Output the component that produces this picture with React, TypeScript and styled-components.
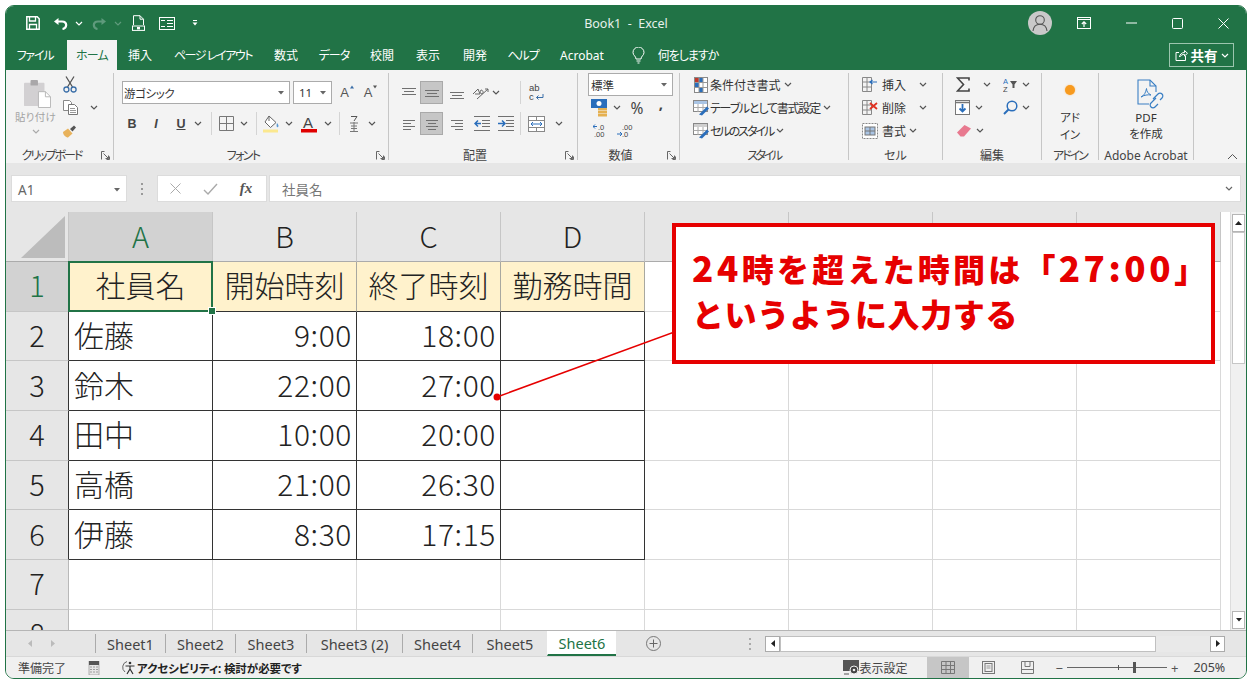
import React from "react"
import styled, { createGlobalStyle } from "styled-components"

const UI = `"Noto Sans", "Noto Sans CJK JP", sans-serif`
const CJK = `"Noto Sans CJK JP", "Noto Sans", sans-serif`
const GREEN = "#217346"

const Global = createGlobalStyle`
  html, body { margin: 0; padding: 0; background: #fff; }
  * { box-sizing: border-box; }
`

const Page = styled.div`
  width: 1252px;
  height: 685px;
  padding: 5px 5px 6px 5px;
  overflow: hidden;
  background: #fff;
  font-family: ${UI};
  font-feature-settings: "palt";
`

const Win = styled.div`
  width: 1242px;
  height: 674px;
  border: 1px solid ${GREEN};
  border-radius: 9px;
  overflow: hidden;
  display: flex;
  flex-direction: column;
  background: #f3f3f3;
`

const Ico = styled.svg`
  display: block;
  flex: none;
  fill: none;
`

/* title bar */
const TitleBar = styled.div`
  height: 34px;
  flex: none;
  background: ${GREEN};
  display: grid;
  grid-template-columns: 1fr auto 1fr;
  align-items: center;
  color: #fff;
`

const Qat = styled.div`
  display: flex;
  align-items: center;
  padding-left: 16px;
`

const WinButtons = styled.div`
  display: flex;
  align-items: center;
  justify-content: flex-end;
`

const AppTitle = styled.div`
  font-size: 12.5px;
  color: #e8f1ec;
  white-space: pre;
`

const Avatar = styled.div`
  width: 24px;
  height: 24px;
  border-radius: 50%;
  background: #c9c9c9;
  display: flex;
  align-items: center;
  justify-content: center;
  margin-right: 8px;
`

const Slot = styled.div<{ $w: number; $h?: number; $on?: boolean }>`
  width: ${(p) => p.$w}px;
  height: ${(p) => p.$h ?? 23}px;
  flex: none;
  display: flex;
  align-items: center;
  justify-content: center;
  ${(p) => (p.$on ? "background: #c6c6c6; border: 1px solid #a9a9a9;" : "")}
`

/* tab strip */
const TabStrip = styled.div`
  height: 30px;
  flex: none;
  background: ${GREEN};
  display: flex;
  align-items: stretch;
  padding-right: 12px;
`

const Tab = styled.div<{ $w: number; $active?: boolean; $track?: number }>`
  width: ${(p) => p.$w}px;
  flex: none;
  display: flex;
  align-items: center;
  justify-content: center;
  font-size: 12px;
  white-space: pre;
  letter-spacing: ${(p) => p.$track ?? 0}px;
  color: ${(p) => (p.$active ? GREEN : "#fff")};
  background: ${(p) => (p.$active ? "#f3f3f3" : "transparent")};
  margin-left: ${(p) => (p.$active ? "3px" : "0")};
`

const ShareButton = styled.div`
  margin: 3px 0 3px auto;
  width: 65px;
  border: 1px solid #9cc5ae;
  display: flex;
  align-items: center;
  justify-content: center;
  gap: 3px;
  color: #fff;
  font-size: 13.5px;
  font-weight: 700;
`

/* ribbon */
const Ribbon = styled.div`
  height: 93px;
  flex: none;
  background: #f3f3f3;
  padding: 3px 0 3px 0;
  display: flex;
`

const Group = styled.div<{ $w: number }>`
  width: ${(p) => p.$w}px;
  flex: none;
  display: flex;
  flex-direction: column;
  border-right: 1px solid #c6c6c6;
`

const GroupBody = styled.div<{ $pl?: number; $pt?: number; $gap?: number }>`
  flex: 1;
  min-height: 0;
  padding-left: ${(p) => p.$pl ?? 0}px;
  padding-top: ${(p) => p.$pt ?? 0}px;
  display: flex;
  flex-direction: column;
  gap: ${(p) => p.$gap ?? 0}px;
`

const GroupLabel = styled.div<{ $launcher?: boolean }>`
  height: 15px;
  flex: none;
  margin-bottom: -3px;
  display: grid;
  grid-template-columns: ${(p) => (p.$launcher ? "1fr 16px" : "1fr")};
  align-items: center;
  font-size: 12px;
  line-height: 15px;
  color: #444;
  text-align: center;
  white-space: nowrap;

  & > svg {
    justify-self: end;
    margin-right: 3px;
  }
`

const ToolRow = styled.div`
  display: flex;
  align-items: center;
  height: 23px;
  flex: none;
  font-size: 12px;
  color: #333;
  white-space: nowrap;
`

const RowText = styled.span<{ $track?: number }>`
  letter-spacing: ${(p) => p.$track ?? 0}px;
`

const Split = styled.div`
  display: flex;
  height: 100%;
`

const Column = styled.div<{ $w: number; $start?: boolean }>`
  width: ${(p) => p.$w}px;
  flex: none;
  display: flex;
  flex-direction: column;
  align-items: ${(p) => (p.$start ? "flex-start" : "center")};
`

const PasteIconBox = styled.div`
  height: 37px;
  padding: 6px 0 0 3px;
`

const PasteLabel = styled.div`
  font-size: 10.5px;
  color: #a3a3a3;
  line-height: 14px;
  letter-spacing: 0.3px;
`

const FieldBox = styled.div<{ $w: number; $pl?: number; $track?: number }>`
  width: ${(p) => p.$w}px;
  height: 23px;
  flex: none;
  background: #fff;
  border: 1px solid #ababab;
  display: flex;
  align-items: center;
  justify-content: space-between;
  padding: 0 5px 0 ${(p) => p.$pl ?? 1}px;
  font-size: 11.5px;
  color: #333;
  letter-spacing: ${(p) => p.$track ?? 0}px;
`

const RowSep = styled.div`
  width: 1px;
  height: 23px;
  background: #d4d4d4;
`

const Letter = styled.span<{ $italic?: boolean; $under?: boolean }>`
  font-family: "Liberation Sans", sans-serif;
  font-weight: 700;
  font-size: 12.5px;
  color: #444;
  font-style: ${(p) => (p.$italic ? "italic" : "normal")};
  text-decoration: ${(p) => (p.$under ? "underline" : "none")};
`

const GrowBox = styled.div`
  display: flex;
  align-items: flex-start;
  font-family: "Liberation Sans", sans-serif;
  font-size: 13px;
  line-height: 15px;
  color: #555;
  gap: 1px;
`

const Percent = styled.span`
  font-size: 15.5px;
  color: #444;
`

const Comma = styled.span`
  font-size: 15px;
  font-weight: 700;
  color: #444;
  line-height: 14px;
  margin-bottom: 10px;
`

const BigButton = styled.div<{ $pt: number }>`
  display: flex;
  flex-direction: column;
  align-items: center;
  padding-top: ${(p) => p.$pt}px;
  font-size: 11.5px;
  line-height: 16px;
  color: #333;
`

const BigText = styled.div<{ $mt: number; $lh?: number }>`
  margin-top: ${(p) => p.$mt}px;
  text-align: center;
  line-height: ${(p) => p.$lh ?? 16}px;
`

const AddinDot = styled.div`
  width: 10px;
  height: 10px;
  border-radius: 50%;
  background: #f79a1e;
  box-shadow: 0 0 2px #fbc37c;
`

const PdfBox = styled.div`
  margin-left: 8px;
`

const CollapseArea = styled.div`
  margin-left: auto;
  padding-right: 8px;
  align-self: flex-end;
`

/* formula bar */
const FormulaBand = styled.div`
  height: 49px;
  flex: none;
  background: #e6e6e6;
  display: flex;
  align-items: flex-start;
  padding: 12px 5px 0 5px;
`

const NameBox = styled.div`
  width: 116px;
  height: 27px;
  background: #fff;
  border: 1px solid #dcdcdc;
  display: flex;
  align-items: center;
  justify-content: space-between;
  padding: 2px 6px 0 6px;
  font-size: 13.5px;
  color: #666;
`

const Grip = styled.div`
  width: 30px;
  height: 27px;
  display: flex;
  align-items: center;
  justify-content: center;
`

const FormulaButtons = styled.div`
  width: 110px;
  height: 27px;
  background: #fff;
  border: 1px solid #dcdcdc;
  display: flex;
  align-items: center;
  margin-right: 2px;
`

const FxMark = styled.span`
  font-family: "Liberation Serif", serif;
  font-style: italic;
  font-weight: 700;
  font-size: 15px;
  color: #555;
`

const FormulaInput = styled.div`
  flex: 1;
  height: 27px;
  background: #fff;
  border: 1px solid #dcdcdc;
  display: flex;
  align-items: center;
  justify-content: space-between;
  padding: 0 7px 0 12px;
  font-family: ${CJK};
  font-size: 13.5px;
  color: #777;
  font-feature-settings: normal;
`

/* sheet */
const SheetArea = styled.div`
  height: 419px;
  flex: none;
  display: flex;
  position: relative;
  background: #fff;
  border-bottom: 1px solid #b5b5b5;
`

const Grid = styled.div`
  width: 1219px;
  height: 100%;
  flex: none;
  overflow: hidden;
  display: grid;
  grid-template-columns: 63px repeat(8, 144px);
  grid-template-rows: 50px repeat(8, 49.7px);
  font-family: ${CJK};
  font-feature-settings: normal;
  color: #222;
`

const Corner = styled.div`
  background: #e6e6e6;
  border-right: 1px solid #c6c6c6;
  border-bottom: 1px solid #ababab;
  display: flex;
  align-items: flex-end;
  justify-content: flex-end;
  padding: 0 3px 3px 0;
`

const ColHead = styled.div<{ $on?: boolean }>`
  background: ${(p) => (p.$on ? "#d2d2d2" : "#e6e6e6")};
  color: ${(p) => (p.$on ? GREEN : "#222")};
  border-right: 1px solid #c6c6c6;
  border-bottom: 1px solid #ababab;
  display: flex;
  align-items: center;
  justify-content: center;
  padding-bottom: 4px;
  font-size: 29px;
  font-weight: 300;
`

const RowHead = styled.div<{ $on?: boolean; $dark?: boolean }>`
  background: ${(p) => (p.$on ? "#d2d2d2" : "#e6e6e6")};
  color: ${(p) => (p.$on ? GREEN : "#222")};
  border-right: 1px solid ${(p) => (p.$dark ? "#333" : "#b8b8b8")};
  border-bottom: 1px solid #c6c6c6;
  display: flex;
  align-items: center;
  justify-content: center;
  padding-bottom: 4px;
  font-size: 29px;
  font-weight: 300;
  overflow: hidden;
`

const Cell = styled.div<{ $kind?: "head" | "body"; $right?: boolean; $selected?: boolean }>`
  position: relative;
  display: flex;
  align-items: center;
  font-size: 30px;
  font-weight: 300;
  white-space: nowrap;
  padding: 0 ${(p) => (p.$right ? 4 : 5)}px 4px ${(p) => (p.$right ? 0 : 5)}px;
  letter-spacing: ${(p) => (p.$right ? 0.6 : 0)}px;
  justify-content: ${(p) => (p.$kind === "head" ? "center" : p.$right ? "flex-end" : "flex-start")};
  background: ${(p) => (p.$kind === "head" ? "#fff2cc" : "#fff")};
  border-right: 1px solid
    ${(p) => (p.$kind === "body" ? "#333" : p.$kind === "head" ? "#a8a8a0" : "#d9d9d9")};
  border-bottom: 1px solid ${(p) => (p.$kind ? "#333" : "#d9d9d9")};
  ${(p) =>
    p.$selected
      ? `&::after {
          content: "";
          position: absolute;
          inset: -1px -1px -1px -1px;
          border: 2px solid ${GREEN};
        }
        &::before {
          content: "";
          position: absolute;
          right: -4px;
          bottom: -4px;
          width: 6px;
          height: 6px;
          background: ${GREEN};
          border: 1px solid #fff;
          z-index: 2;
        }`
      : ""}
`

const VScroll = styled.div`
  flex: 1;
  margin-left: 5px;
  background: #f0f0f0;
  border-left: 1px solid #dcdcdc;
  display: flex;
  flex-direction: column;
  padding: 2px 1px 1px 1px;
`

const VButton = styled.div`
  height: 18px;
  flex: none;
  background: #fff;
  border: 1px solid #b5b5b5;
  display: flex;
  align-items: center;
  justify-content: center;
`

const VThumb = styled.div`
  height: 132px;
  flex: none;
  background: #fff;
  border: 1px solid #c6c6c6;
`

const VTrack = styled.div`
  flex: 1;
`

const Callout = styled.div`
  position: absolute;
  left: 666px;
  top: 11px;
  width: 543px;
  height: 141px;
  background: #fff;
  border: 4px solid #e60000;
  padding: 17px 0 0 16px;
  font-family: ${CJK};
  font-feature-settings: normal;
  font-weight: 900;
  font-size: 32px;
  line-height: 45px;
  color: #e60000;
  white-space: nowrap;
`

const CalloutLine = styled.div<{ $track: number }>`
  letter-spacing: ${(p) => p.$track}px;
`

const Digits = styled.span`
  font-size: 35px;
  letter-spacing: 3.6px;
`

const Connector = styled.svg`
  position: absolute;
  left: 484px;
  top: 116px;
  pointer-events: none;
`

/* sheet tabs */
const SheetBar = styled.div`
  height: 25px;
  flex: none;
  background: #e6e6e6;
  display: flex;
  align-items: stretch;
  font-size: 14.5px;
  color: #444;
`

const NavArrows = styled.div`
  width: 89px;
  flex: none;
  display: flex;
  align-items: center;
  gap: 19px;
  padding-left: 22px;
`

const SheetTab = styled.div<{ $w: number; $active?: boolean }>`
  width: ${(p) => p.$w}px;
  flex: none;
  display: flex;
  align-items: center;
  justify-content: center;
  white-space: pre;
  border-left: 1px solid ${(p) => (p.$active ? "transparent" : "#ababab")};
  margin: ${(p) => (p.$active ? "0" : "3px 0")};
  color: ${(p) => (p.$active ? GREEN : "#444")};
  background: ${(p) => (p.$active ? "#fff" : "transparent")};
  ${(p) => (p.$active ? `border-bottom: 2px solid ${GREEN};` : "")}
`

const AddSheet = styled.div`
  width: 126px;
  flex: none;
  display: flex;
  align-items: center;
  padding-left: 30px;
`

const BarGrip = styled.div`
  width: 23px;
  flex: none;
  padding-right: 7px;
  display: flex;
  align-items: center;
  justify-content: center;
`

const HScroll = styled.div`
  width: 460px;
  height: 16px;
  align-self: center;
  display: flex;
  align-items: stretch;
`

const HButton = styled.div`
  width: 15px;
  flex: none;
  background: #fff;
  border: 1px solid #ababab;
  display: flex;
  align-items: center;
  justify-content: center;
`

const HThumb = styled.div`
  width: 376px;
  flex: none;
  background: #fff;
  border: 1px solid #c0c0c0;
`

const HTrack = styled.div`
  flex: 1;
  background: #e9e9e9;
`

/* status bar */
const StatusBar = styled.div`
  flex: 1;
  background: #f0f0f0;
  border-top: 1px solid #d8d8d8;
  display: flex;
  align-items: center;
  font-size: 12px;
  color: #444;
  padding-left: 12px;
  white-space: nowrap;
`

const StatusText = styled.span<{ $bold?: boolean }>`
  font-weight: ${(p) => (p.$bold ? 700 : 400)};
  font-size: ${(p) => (p.$bold ? 11.5 : 12)}px;
  margin-left: ${(p) => (p.$bold ? 1 : 0)}px;
  letter-spacing: ${(p) => (p.$bold ? -0.1 : 0)}px;
  color: ${(p) => (p.$bold ? "#222" : "#444")};
`

const ViewButton = styled.div<{ $w: number; $on?: boolean }>`
  width: ${(p) => p.$w}px;
  height: 100%;
  flex: none;
  display: flex;
  align-items: center;
  justify-content: center;
  background: ${(p) => (p.$on ? "#c6c6c6" : "transparent")};
`

const Zoomer = styled.div`
  display: flex;
  align-items: center;
  margin-left: 9px;
  gap: 4px;
  font-size: 13px;
  color: #555;
`

const SliderTrack = styled.div`
  width: 100px;
  height: 1px;
  background: #666;
  position: relative;
`

const SliderMark = styled.div<{ $x: number; $w: number; $h: number }>`
  position: absolute;
  left: ${(p) => p.$x}px;
  top: ${(p) => -p.$h / 2}px;
  width: ${(p) => p.$w}px;
  height: ${(p) => p.$h}px;
  background: #555;
`

const Percentage = styled.span`
  margin-left: 15px;
  font-size: 12.5px;
  color: #444;
`

/* drawings */
const Chev = ({ c = "#555" }: { c?: string }) => (
  <Ico width="8" height="5" viewBox="0 0 8 5">
    <path d="M1 1l3 3 3-3" stroke={c} strokeWidth="1.2" />
  </Ico>
)

const DownTri = ({ c = "#666" }: { c?: string }) => (
  <Ico width="6" height="4" viewBox="0 0 6 4">
    <path d="M0 0h6L3 3.5z" fill={c} />
  </Ico>
)

const Lines = ({ ys, xs }: { ys: number[]; xs: [number, number][] }) => (
  <Ico width="18" height="16" viewBox="0 0 18 16">
    {ys.map((y, i) => (
      <path key={i} d={`M${xs[i % xs.length][0]} ${y}.5H${xs[i % xs.length][1]}`} stroke="#707070" />
    ))}
  </Ico>
)

const SaveIcon = () => (
  <Ico width="14" height="14" viewBox="0 0 14 14">
    <path d="M.8.8h10.4l2 2v10.4H.8z" stroke="#fff" strokeWidth="1.5" />
    <path d="M3.5 1v4h6V1M3.5 13V8.5h7V13" stroke="#fff" strokeWidth="1.3" />
  </Ico>
)

const UndoIcon = ({ c = "#fff", flip = false }: { c?: string; flip?: boolean }) => (
  <Ico width="15" height="13" viewBox="0 0 15 13">
    <g transform={flip ? "translate(15 0) scale(-1 1)" : undefined}>
      <path d="M1 4.5L5.5 1v7z" fill={c} />
      <path d="M4 4.5h5c6 0 5 7 .5 7.5" stroke={c} strokeWidth="2.2" />
    </g>
  </Ico>
)

const PreviewIcon = () => (
  <Ico width="13" height="16" viewBox="0 0 13 16">
    <path d="M1.5 10V.7h6.5l3.5 3.5V10M8 .7v3.5h3.5" stroke="#fff" />
    <rect x=".5" y="11" width="12" height="4.4" fill="none" stroke="#fff" />
    <rect x="5" y="12" width="3" height="2.4" fill="#fff" />
  </Ico>
)

const FormIcon = () => (
  <Ico width="16" height="13" viewBox="0 0 16 13">
    <rect x=".5" y=".5" width="15" height="12" stroke="#fff" />
    <path d="M2 3.5h4M8 3.5h6M8 6.5h6M2 9.5h4M8 9.5h6" stroke="#fff" strokeWidth="1.2" />
  </Ico>
)

const CustomizeIcon = () => (
  <Ico width="6" height="6" viewBox="0 0 6 6">
    <path d="M1 .5h4" stroke="#fff" />
    <path d="M.5 2.5h5L3 5.5z" fill="#fff" />
  </Ico>
)

const PersonIcon = () => (
  <Ico width="18" height="18" viewBox="0 0 18 18">
    <circle cx="9" cy="6" r="4.3" stroke="#555" strokeWidth="1.1" />
    <path d="M2 17c.5-4.5 3.5-6.8 7-6.8s6.5 2.3 7 6.8" stroke="#555" strokeWidth="1.1" />
  </Ico>
)

const RestoreIcon = () => (
  <Ico width="14" height="12" viewBox="0 0 14 12">
    <rect x=".5" y=".5" width="13" height="11" stroke="#fff" />
    <path d="M1 2.5h12" stroke="#fff" strokeWidth="1.2" />
    <path d="M7 10V5M4.8 7L7 4.8 9.2 7" stroke="#fff" strokeWidth="1.2" />
  </Ico>
)

const MinIcon = () => (
  <Ico width="11" height="2" viewBox="0 0 11 2">
    <path d="M0 1h11" stroke="#fff" />
  </Ico>
)

const MaxIcon = () => (
  <Ico width="11" height="11" viewBox="0 0 11 11">
    <rect x=".5" y=".5" width="10" height="10" rx="1" stroke="#fff" />
  </Ico>
)

const CloseIcon = ({ c = "#fff", s = 11 }: { c?: string; s?: number }) => (
  <Ico width={s} height={s} viewBox="0 0 11 11">
    <path d="M.5.5l10 10M10.5.5l-10 10" stroke={c} />
  </Ico>
)

const BulbIcon = () => (
  <Ico width="13" height="17" viewBox="0 0 13 17">
    <path d="M4 12c0-3-3-3.5-3-6.5a5.5 5.5 0 0 1 11 0c0 3-3 3.5-3 6.5z" stroke="#fff" />
    <path d="M4.5 14h4M5.5 16h2" stroke="#fff" />
  </Ico>
)

const ShareIcon = () => (
  <Ico width="13" height="12" viewBox="0 0 13 12">
    <path d="M4 3.5H1v8h9.5V7" stroke="#fff" />
    <path d="M4.5 8c.3-2.8 2.3-4.5 5-4.5V1.5l3 2.800-3 2.700V5.300C7.5 5.300 6 6.300 4.500 8z" stroke="#fff" />
  </Ico>
)

const PasteIcon = () => (
  <Ico width="27" height="30" viewBox="0 0 29 30">
    <rect x="0" y="3" width="22" height="25" rx="1" fill="#d2d0d2" />
    <rect x="7" y="0" width="8" height="6" rx="1" fill="#a9a7a9" />
    <path d="M15.5 12.5H23l5.5 5.5v11.5h-13z" fill="#fff" stroke="#b5b5b5" />
    <path d="M23 12.5V18h5.5" stroke="#b5b5b5" />
  </Ico>
)

const CutIcon = () => (
  <Ico width="14" height="17" viewBox="0 0 14 17">
    <path d="M3 .5l6.5 10.500M11 .5L4.5 11" stroke="#555" strokeWidth="1.3" />
    <circle cx="3.4" cy="13.5" r="2.5" stroke="#3a6ea8" strokeWidth="1.3" />
    <circle cx="10.6" cy="13.5" r="2.5" stroke="#3a6ea8" strokeWidth="1.3" />
  </Ico>
)

const CopyIcon = () => (
  <Ico width="15" height="15" viewBox="0 0 15 15">
    <path d="M.5.5h6l2 2v8h-8z" fill="#fff" stroke="#888" />
    <path d="M5.5 4.5h6l3 3v7h-9z" fill="#fff" stroke="#777" />
    <path d="M7 8.5h5M7 10.5h6M7 12.5h6" stroke="#999" />
  </Ico>
)

const PainterIcon = () => (
  <Ico width="16" height="14" viewBox="0 0 16 14">
    <path d="M1 8l5-3.5 4.5 5L6 13.5C4 13.5 1 11 1 8z" fill="#e8b25b" />
    <path d="M8 5l4-3.5 2 2-3.5 4z" fill="#555" />
  </Ico>
)

const GrowTri = ({ up }: { up: boolean }) => (
  <Ico width="4" height="4" viewBox="0 0 4 4">
    <path d={up ? "M0 3.5L2 .5l2 3z" : "M0 .5l2 3 2-3z"} fill={up ? "#3a6ea8" : "#555"} />
  </Ico>
)

const BorderIcon = () => (
  <Ico width="15" height="15" viewBox="0 0 15 15">
    <path d="M.5.5h14v14H.5zM7.5.5v14M.5 7.5h14" stroke="#777" />
  </Ico>
)

const FillIcon = () => (
  <Ico width="17" height="18" viewBox="0 0 17 18">
    <path d="M6 1l7 6.5-5.5 5L2 7z" fill="#fff" stroke="#666" />
    <path d="M6 1v5" stroke="#666" />
    <path d="M14 8c1.5 2 2 3 1 4s-2-.5-1-4z" fill="#5a9bd5" />
    <rect x="0" y="14.5" width="15" height="3" fill="#fbe88f" />
  </Ico>
)

const FontColorIcon = () => (
  <Ico width="16" height="18" viewBox="0 0 16 18">
    <text x="2" y="12.5" fontFamily="Liberation Sans" fontSize="15" fill="#444">A</text>
    <rect x="0" y="14" width="16" height="3.5" fill="#e00000" />
  </Ico>
)

const PhoneticIcon = () => (
  <Ico width="10" height="18" viewBox="0 0 10 18">
    <path d="M2 1.5h6L5 6" stroke="#555" />
    <path d="M1 8h8M5 7v10M2 11h6M2 13.5h6M1 16.5h8" stroke="#777" />
  </Ico>
)

const OrientIcon = () => (
  <Ico width="18" height="16" viewBox="0 0 18 16">
    <path d="M2 9l5-5 2 5-5 0M10 5c2 0 3 3 1 4-1.5 0-2.5-2-1-4" stroke="#666" />
    <path d="M6 14L17 4M17 4h-3M17 4v3" stroke="#666" />
  </Ico>
)

const WrapIcon = () => (
  <Ico width="18" height="19" viewBox="0 0 18 19">
    <text x="2" y="8" fontFamily="Liberation Sans" fontSize="9.5" fill="#444">ab</text>
    <text x="2" y="17" fontFamily="Liberation Sans" fontSize="9.5" fill="#444">c</text>
    <path d="M16 11v3.5H9.5M11.5 12.5l-2 2 2 2" stroke="#3a6ea8" />
  </Ico>
)

const IndentIcon = ({ flip }: { flip?: boolean }) => (
  <Ico width="16" height="15" viewBox="0 0 16 15">
    <path d="M0 .5h16M0 14.5h16M8 4.5h8M8 7.5h8M8 10.5h8" stroke="#707070" />
    <path
      d={flip ? "M0 7.5h6M4 4.5l3 3-3 3" : "M1 7.5h6M4 4.5l-3 3 3 3"}
      stroke="#2a6ebb"
      strokeWidth="1.5"
    />
  </Ico>
)

const MergeIcon = () => (
  <Ico width="17" height="16" viewBox="0 0 17 16">
    <rect x=".5" y=".5" width="16" height="15" stroke="#888" fill="#fff" />
    <path d="M.5 4.5h16M.5 11.5h16M8.5.5v4M8.5 11.5v4" stroke="#888" />
    <path d="M3 8h11M5 6L3 8l2 2M12 6l2 2-2 2" stroke="#2a6ebb" />
  </Ico>
)

const CurrencyIcon = () => (
  <Ico width="17" height="18" viewBox="0 0 17 18">
    <rect x="0" y="0" width="16" height="9" fill="#2a6ebb" />
    <circle cx="8" cy="4.5" r="2.5" fill="#fff" />
    <rect x="7" y="9" width="9" height="2.5" fill="#e5b050" />
    <rect x="7" y="12" width="9" height="2.5" fill="#e5b050" />
    <rect x="7" y="15" width="9" height="2.5" fill="#e5b050" />
  </Ico>
)

const DecimalIcon = ({ inc }: { inc: boolean }) => (
  <Ico width="17" height="15" viewBox="0 0 17 15">
    <text x="5" y="6.5" fontFamily="Liberation Sans" fontSize="7.5" fill="#444">{inc ? ".0" : ".00"}</text>
    <text x={inc ? 1 : 5} y="14" fontFamily="Liberation Sans" fontSize="7.5" fill="#444">{inc ? ".00" : ".0"}</text>
    <path d={inc ? "M0 3.5h4M2 1.5l-2 2 2 2" : "M0 11h5M3 9l2 2-2 2"} stroke="#2a6ebb" />
  </Ico>
)

const CondIcon = () => (
  <Ico width="15" height="16" viewBox="0 0 15 16">
    <rect x=".5" y=".5" width="13" height="15" fill="#fff" stroke="#888" />
    <rect x="1" y="1" width="4" height="4" fill="#c0392b" />
    <rect x="5" y="1" width="4" height="4" fill="#2a6ebb" />
    <rect x="1" y="6" width="4" height="4" fill="#2a6ebb" />
    <rect x="5" y="11" width="4" height="4" fill="#2a6ebb" />
    <path d="M5 .5v15M9 .5v15M.5 5.5h13M.5 10.5h13" stroke="#999" />
  </Ico>
)

const TableIcon = ({ c = "#a9c4e4" }: { c?: string }) => (
  <Ico width="17" height="16" viewBox="0 0 17 16">
    <rect x=".5" y=".5" width="14" height="11" fill="#fff" stroke="#888" />
    <rect x="1" y="1" width="13" height="3" fill={c} />
    <path d="M.5 7.5h14M5 4v8M10 4v8" stroke="#aaa" />
    <path d="M6 14.5l8-8 2 2-7 7z" fill="#2a6ebb" />
  </Ico>
)

const InsertIcon = () => (
  <Ico width="16" height="15" viewBox="0 0 16 15">
    <path d="M.5.5h9v14h-9zM.5 5h9M.5 10h9M5 .5v14" stroke="#888" />
    <path d="M15 5H8M10.5 3L8 5l2.5 2" stroke="#2a6ebb" strokeWidth="1.2" />
  </Ico>
)

const DeleteIcon = () => (
  <Ico width="16" height="15" viewBox="0 0 16 15">
    <path d="M.5.5h9v14h-9zM.5 5h9M.5 10h9M5 .5v14" stroke="#888" />
    <path d="M8 3l7 6M15 3L8 9" stroke="#e03020" strokeWidth="1.8" />
  </Ico>
)

const FormatIcon = () => (
  <Ico width="16" height="16" viewBox="0 0 16 16">
    <rect x=".5" y=".5" width="15" height="15" stroke="#888" strokeDasharray="2 1" fill="#fff" />
    <rect x="3" y="4" width="10" height="8" fill="#a9c4e4" stroke="#777" />
    <path d="M8 4v8M3 8h10" stroke="#777" />
  </Ico>
)

const SigmaIcon = () => (
  <Ico width="14" height="15" viewBox="0 0 14 15">
    <path d="M13 3.5V1H1.5l6 6.5-6 6.5H13v-2.500" stroke="#444" strokeWidth="1.6" />
  </Ico>
)

const SortIcon = () => (
  <Ico width="15" height="16" viewBox="0 0 15 16">
    <text x="0" y="7" fontFamily="Liberation Sans" fontSize="7.5" fill="#2a6ebb">A</text>
    <text x="0" y="15" fontFamily="Liberation Sans" fontSize="7.5" fill="#444">Z</text>
    <path d="M7 4h7l-2.5 3.5V11h-2V7.5z" fill="#555" />
  </Ico>
)

const FillDownIcon = () => (
  <Ico width="15" height="15" viewBox="0 0 15 15">
    <rect x=".5" y=".5" width="14" height="14" fill="#fff" stroke="#777" />
    <path d="M.5 2.5h14" stroke="#777" strokeWidth="1.5" />
    <path d="M7.5 4v7M4.5 8.5l3 3 3-3" stroke="#2a6ebb" strokeWidth="1.8" />
  </Ico>
)

const FindIcon = () => (
  <Ico width="15" height="15" viewBox="0 0 15 15">
    <circle cx="9" cy="6" r="4.8" stroke="#2a6ebb" strokeWidth="1.5" />
    <path d="M5.5 9.5L1 14" stroke="#2a6ebb" strokeWidth="2" />
  </Ico>
)

const EraserIcon = () => (
  <Ico width="14" height="12" viewBox="0 0 14 12">
    <path d="M0 7.5L7.5 0 14 3.5l-7 8H3.500z" fill="#e8798f" />
  </Ico>
)

const PdfIcon = () => (
  <Ico width="27" height="30" viewBox="0 0 27 30">
    <path d="M12 25H1V1h12l6 6v6" stroke="#3a7fc4" strokeWidth="1.1" />
    <path d="M13 1v6h6" stroke="#3a7fc4" strokeWidth="1.1" />
    <path d="M4 18c3-1 5-5 5.5-8.500 0 3 2 5.500 4.500 6.500-3-.5-7 0-10 2z" stroke="#3a7fc4" />
    <path d="M16 20l5-5a2.8 2.8 0 0 1 4 4l-2 2M19 19l-5 5a2.8 2.8 0 0 0 4 4l3-3" stroke="#3a7fc4" strokeWidth="1.2" />
  </Ico>
)

const Launcher = () => (
  <Ico width="9" height="9" viewBox="0 0 9 9">
    <path d="M.5 8.5v-8h3M5.5 8.5h3v-3M2.5 2.5l5 5M4.5 7.5h3v-3" stroke="#666" />
  </Ico>
)

const GripDots = ({ c = "#999" }: { c?: string }) => (
  <Ico width="3" height="12" viewBox="0 0 3 12">
    <path d="M0 0h2v2H0zM0 5h2v2H0zM0 10h2v2H0z" fill={c} />
  </Ico>
)

const CheckIcon = () => (
  <Ico width="15" height="12" viewBox="0 0 15 12">
    <path d="M1 7l4 4L14 1" stroke="#aaa" strokeWidth="1.4" />
  </Ico>
)

const CaretUp = () => (
  <Ico width="11" height="7" viewBox="0 0 11 7">
    <path d="M1 6l4.5-4.500L10 6" stroke="#555" />
  </Ico>
)

const TriLeft = ({ c = "#222" }: { c?: string }) => (
  <Ico width="4" height="7" viewBox="0 0 4 7">
    <path d="M4 0v7L0 3.5z" fill={c} />
  </Ico>
)

const TriRight = ({ c = "#222" }: { c?: string }) => (
  <Ico width="4" height="7" viewBox="0 0 4 7">
    <path d="M0 0v7l4-3.5z" fill={c} />
  </Ico>
)

const TriUp = () => (
  <Ico width="7" height="4" viewBox="0 0 7 4">
    <path d="M0 4h7L3.5 0z" fill="#222" />
  </Ico>
)

const PlusCircle = () => (
  <Ico width="15" height="15" viewBox="0 0 15 15">
    <circle cx="7.5" cy="7.5" r="7" stroke="#777" />
    <path d="M7.5 3.5v8M3.5 7.5h8" stroke="#666" />
  </Ico>
)

const CalcIcon = () => (
  <Ico width="12" height="14" viewBox="0 0 12 14">
    <rect x="1" y="0" width="10" height="14" fill="#e6e6e6" stroke="#888" strokeWidth=".6" />
    <rect x="1" y="0" width="10" height="4" fill="#555" />
    <path d="M2.5 6h1M5.5 6h1M8.5 6h1M2.5 8.5h1M5.5 8.5h1M8.5 8.5h1M2.5 11h1M5.5 11h1M8.5 11h1" stroke="#555" />
  </Ico>
)

const AccessIcon = () => (
  <Ico width="14" height="15" viewBox="0 0 14 15">
    <path d="M5 1.5A6 6 0 0 0 3 12" stroke="#666" />
    <circle cx="8" cy="3" r="1.3" fill="#333" />
    <path d="M3.5 6h9M8 6v3M5 14l3-5 3 5" stroke="#333" strokeWidth="1.2" />
  </Ico>
)

const DisplayIcon = () => (
  <Ico width="17" height="15" viewBox="0 0 17 15">
    <rect x="0" y="0" width="16" height="11" fill="#555" />
    <circle cx="11" cy="10" r="4" fill="#444" stroke="#f0f0f0" />
    <circle cx="11" cy="10" r="1.3" fill="#f0f0f0" />
    <path d="M1 14h5" stroke="#555" />
  </Ico>
)

const NormalView = () => (
  <Ico width="14" height="13" viewBox="0 0 14 13">
    <path d="M.5.5h13v12H.5zM.5 4.5h13M.5 8.5h13M5 .5v12M9.5.5v12" stroke="#777" />
  </Ico>
)

const PageView = () => (
  <Ico width="13" height="13" viewBox="0 0 13 13">
    <rect x=".5" y=".5" width="12" height="12" stroke="#777" />
    <rect x="3" y="2.5" width="7" height="8" stroke="#777" />
    <path d="M4.5 5h4M4.5 7h4" stroke="#999" />
  </Ico>
)

const BreakView = () => (
  <Ico width="13" height="13" viewBox="0 0 13 13">
    <path d="M.5.5h12v12H.5zM.5 8.5h12" stroke="#777" />
    <path d="M4 .5v5h5v-5" stroke="#777" />
  </Ico>
)

const CornerTriangle = () => (
  <Ico width="44" height="42" viewBox="0 0 44 42">
    <path d="M44 0v42H0z" fill="#bcbcbc" />
  </Ico>
)

const columns = ["A", "B", "C", "D", "E", "F", "G", "H"]
const headers = ["社員名", "開始時刻", "終了時刻", "勤務時間"]
const people = [
  ["佐藤", "9:00", "18:00"],
  ["鈴木", "22:00", "27:00"],
  ["田中", "10:00", "20:00"],
  ["高橋", "21:00", "26:30"],
  ["伊藤", "8:30", "17:15"],
]
const tabs: [string, number, number][] = [
  ["挿入", 46, 0],
  ["ページ レイアウト", 100, -1.4],
  ["数式", 46, 0],
  ["データ", 50, -1],
  ["校閲", 46, 0],
  ["表示", 46, 0],
  ["開発", 48, 0],
  ["ヘルプ", 48, -1],
  ["Acrobat", 70, 0],
]
const sheets: [string, number][] = [
  ["Sheet1", 70],
  ["Sheet2", 70],
  ["Sheet3", 71],
  ["Sheet3 (2)", 96],
  ["Sheet4", 70],
  ["Sheet5", 75],
]

const Sheet = () => (
  <Grid>
    <Corner>
      <CornerTriangle />
    </Corner>
    {columns.map((c, i) => (
      <ColHead key={c} $on={i === 0}>
        {/* E to H sit under the callout */}
        {i < 4 ? c : null}
      </ColHead>
    ))}
    <RowHead $on>1</RowHead>
    {columns.map((c, i) =>
      i < 4 ? (
        <Cell key={c} $kind="head" $selected={i === 0}>
          {headers[i]}
        </Cell>
      ) : (
        <Cell key={c} />
      ),
    )}
    {people.map((p, r) => (
      <React.Fragment key={r}>
        <RowHead $dark>{r + 2}</RowHead>
        <Cell $kind="body">{p[0]}</Cell>
        <Cell $kind="body" $right>
          {p[1]}
        </Cell>
        <Cell $kind="body" $right>
          {p[2]}
        </Cell>
        <Cell $kind="body" />
        {columns.slice(4).map((c) => (
          <Cell key={c} />
        ))}
      </React.Fragment>
    ))}
    {[7, 8].map((n) => (
      <React.Fragment key={n}>
        <RowHead>{n}</RowHead>
        {columns.map((c) => (
          <Cell key={c} />
        ))}
      </React.Fragment>
    ))}
  </Grid>
)

const App: React.FC = () => (
  <Page>
    <Global />
    <Win>
      <TitleBar>
        <Qat>
          <Slot $w={22}><SaveIcon /></Slot>
          <Slot $w={32}><UndoIcon /></Slot>
          <Slot $w={6}><Chev c="#fff" /></Slot>
          <Slot $w={34}><UndoIcon c="#5f9a7c" flip /></Slot>
          <Slot $w={4}><Chev c="#5f9a7c" /></Slot>
          <Slot $w={36}><PreviewIcon /></Slot>
          <Slot $w={22}><FormIcon /></Slot>
          <Slot $w={34}><CustomizeIcon /></Slot>
        </Qat>
        <AppTitle>Book1  -  Excel</AppTitle>
        <WinButtons>
          <Avatar><PersonIcon /></Avatar>
          <Slot $w={48}><RestoreIcon /></Slot>
          <Slot $w={46}><MinIcon /></Slot>
          <Slot $w={46}><MaxIcon /></Slot>
          <Slot $w={46}><CloseIcon /></Slot>
        </WinButtons>
      </TitleBar>

      <TabStrip>
        <Tab $w={58} $track={-1.2}>ファイル</Tab>
        <Tab $w={50} $active $track={-0.8}>ホーム</Tab>
        {tabs.map(([t, w, k]) => (
          <Tab key={t} $w={w} $track={k}>{t}</Tab>
        ))}
        <Tab $w={42}><BulbIcon /></Tab>
        <Tab $w={58} $track={-1}>何をしますか</Tab>
        <ShareButton>
          <ShareIcon />
          共有
          <Chev c="#fff" />
        </ShareButton>
      </TabStrip>

      <Ribbon>
        <Group $w={108}>
          <GroupBody $pl={6}>
            <Split>
              <Column $w={47}>
                <PasteIconBox><PasteIcon /></PasteIconBox>
                <PasteLabel>貼り付け</PasteLabel>
                <Slot $w={47} $h={14}><Chev c="#aaa" /></Slot>
              </Column>
              <Column $w={47} $start>
                <ToolRow><Slot $w={22}><CutIcon /></Slot></ToolRow>
                <ToolRow>
                  <Slot $w={22}><CopyIcon /></Slot>
                  <Slot $w={25}><Chev /></Slot>
                </ToolRow>
                <ToolRow><Slot $w={22}><PainterIcon /></Slot></ToolRow>
              </Column>
            </Split>
          </GroupBody>
          <GroupLabel $launcher>
            <RowText $track={-2}>クリップボード</RowText>
            <Launcher />
          </GroupLabel>
        </Group>

        <Group $w={275}>
          <GroupBody $pl={8} $pt={8} $gap={8}>
            <ToolRow>
              <FieldBox $w={168} $track={-0.4}>游ゴシック<DownTri /></FieldBox>
              <Slot $w={3} />
              <FieldBox $w={39} $pl={5}>11<DownTri /></FieldBox>
              <Slot $w={3} />
              <Slot $w={24}><GrowBox>A<GrowTri up /></GrowBox></Slot>
              <Slot $w={23}><GrowBox>A<GrowTri up={false} /></GrowBox></Slot>
            </ToolRow>
            <ToolRow>
              <Slot $w={20}><Letter>B</Letter></Slot>
              <Slot $w={28}><Letter $italic>I</Letter></Slot>
              <Slot $w={22}><Letter $under>U</Letter></Slot>
              <Slot $w={12}><Chev /></Slot>
              <Slot $w={14}><RowSep /></Slot>
              <Slot $w={16}><BorderIcon /></Slot>
              <Slot $w={20}><Chev /></Slot>
              <Slot $w={4}><RowSep /></Slot>
              <Slot $w={26}><FillIcon /></Slot>
              <Slot $w={10}><Chev /></Slot>
              <Slot $w={30}><FontColorIcon /></Slot>
              <Slot $w={8}><Chev /></Slot>
              <Slot $w={14}><RowSep /></Slot>
              <Slot $w={16}><PhoneticIcon /></Slot>
              <Slot $w={20}><Chev /></Slot>
            </ToolRow>
          </GroupBody>
          <GroupLabel $launcher>
            <RowText $track={-1.7}>フォント</RowText>
            <Launcher />
          </GroupLabel>
        </Group>

        <Group $w={189}>
          <GroupBody $pl={9} $pt={8} $gap={8}>
            <ToolRow>
              <Slot $w={22}><Lines ys={[3, 6, 9]} xs={[[2, 16], [4, 14]]} /></Slot>
              <Slot $w={23} $on><Lines ys={[5, 8, 11]} xs={[[2, 16], [4, 14]]} /></Slot>
              <Slot $w={27}><Lines ys={[7, 10, 13]} xs={[[2, 16], [4, 14]]} /></Slot>
              <Slot $w={20}><OrientIcon /></Slot>
              <Slot $w={12}><Chev /></Slot>
              <Slot $w={17} />
              <Slot $w={2}><RowSep /></Slot>
              <Slot $w={30}><WrapIcon /></Slot>
            </ToolRow>
            <ToolRow>
              <Slot $w={22}><Lines ys={[4, 7, 10, 13]} xs={[[3, 15], [3, 11]]} /></Slot>
              <Slot $w={23} $on><Lines ys={[4, 7, 10, 13]} xs={[[3, 15], [5, 13]]} /></Slot>
              <Slot $w={27}><Lines ys={[4, 7, 10, 13]} xs={[[3, 15], [7, 15]]} /></Slot>
              <Slot $w={24}><IndentIcon /></Slot>
              <Slot $w={24}><IndentIcon flip /></Slot>
              <Slot $w={1} />
              <Slot $w={2}><RowSep /></Slot>
              <Slot $w={30}><MergeIcon /></Slot>
              <Slot $w={16}><Chev /></Slot>
            </ToolRow>
          </GroupBody>
          <GroupLabel $launcher>
            <span>配置</span>
            <Launcher />
          </GroupLabel>
        </Group>

        <Group $w={102}>
          <GroupBody $pl={10}>
            <ToolRow><FieldBox $w={85} $pl={2}>標準<DownTri /></FieldBox></ToolRow>
            <ToolRow>
              <Slot $w={22}><CurrencyIcon /></Slot>
              <Slot $w={14}><Chev /></Slot>
              <Slot $w={26}><Percent>%</Percent></Slot>
              <Slot $w={22}><Comma>,</Comma></Slot>
            </ToolRow>
            <ToolRow>
              <Slot $w={26}><DecimalIcon inc /></Slot>
              <Slot $w={22}><DecimalIcon inc={false} /></Slot>
            </ToolRow>
          </GroupBody>
          <GroupLabel $launcher>
            <span>数値</span>
            <Launcher />
          </GroupLabel>
        </Group>

        <Group $w={169}>
          <GroupBody $pl={12}>
            <ToolRow>
              <Slot $w={18}><CondIcon /></Slot>
              <RowText>条件付き書式</RowText>
              <Slot $w={14}><Chev /></Slot>
            </ToolRow>
            <ToolRow>
              <Slot $w={18}><TableIcon /></Slot>
              <RowText $track={-1.2}>テーブルとして書式設定</RowText>
              <Slot $w={14}><Chev /></Slot>
            </ToolRow>
            <ToolRow>
              <Slot $w={18}><TableIcon c="#cfcfcf" /></Slot>
              <RowText $track={-2}>セルのスタイル</RowText>
              <Slot $w={14}><Chev /></Slot>
            </ToolRow>
          </GroupBody>
          <GroupLabel>
            <RowText $track={-2.4}>スタイル</RowText>
          </GroupLabel>
        </Group>

        <Group $w={94}>
          <GroupBody $pl={11}>
            <ToolRow>
              <Slot $w={20}><InsertIcon /></Slot>
              <Slot $w={28}>挿入</Slot>
              <Slot $w={30}><Chev /></Slot>
            </ToolRow>
            <ToolRow>
              <Slot $w={20}><DeleteIcon /></Slot>
              <Slot $w={28}>削除</Slot>
              <Slot $w={30}><Chev /></Slot>
            </ToolRow>
            <ToolRow>
              <Slot $w={20}><FormatIcon /></Slot>
              <Slot $w={28}>書式</Slot>
              <Slot $w={10}><Chev /></Slot>
            </ToolRow>
          </GroupBody>
          <GroupLabel>
            <span>セル</span>
          </GroupLabel>
        </Group>

        <Group $w={99}>
          <GroupBody $pl={10}>
            <ToolRow>
              <Slot $w={20}><SigmaIcon /></Slot>
              <Slot $w={28}><Chev /></Slot>
              <Slot $w={18}><SortIcon /></Slot>
              <Slot $w={14}><Chev /></Slot>
            </ToolRow>
            <ToolRow>
              <Slot $w={18}><FillDownIcon /></Slot>
              <Slot $w={16}><Chev /></Slot>
              <Slot $w={14} />
              <Slot $w={18}><FindIcon /></Slot>
              <Slot $w={14}><Chev /></Slot>
            </ToolRow>
            <ToolRow>
              <Slot $w={21}><EraserIcon /></Slot>
              <Slot $w={12}><Chev /></Slot>
            </ToolRow>
          </GroupBody>
          <GroupLabel>
            <span>編集</span>
          </GroupLabel>
        </Group>

        <Group $w={57}>
          <GroupBody>
            <BigButton $pt={12}>
              <AddinDot />
              <BigText $mt={14} $lh={17}>アド<br />イン</BigText>
            </BigButton>
          </GroupBody>
          <GroupLabel>
            <RowText $track={-2}>アドイン</RowText>
          </GroupLabel>
        </Group>

        <Group $w={95}>
          <GroupBody>
            <BigButton $pt={6}>
              <PdfBox><PdfIcon /></PdfBox>
              <BigText $mt={1}>PDF<br />を作成</BigText>
            </BigButton>
          </GroupBody>
          <GroupLabel>
            <span>Adobe Acrobat</span>
          </GroupLabel>
        </Group>

        <CollapseArea><CaretUp /></CollapseArea>
      </Ribbon>

      <FormulaBand>
        <NameBox>A1<DownTri /></NameBox>
        <Grip><GripDots /></Grip>
        <FormulaButtons>
          <Slot $w={34}><CloseIcon c="#aaa" /></Slot>
          <Slot $w={36}><CheckIcon /></Slot>
          <Slot $w={36}><FxMark>fx</FxMark></Slot>
        </FormulaButtons>
        <FormulaInput>社員名<Chev c="#666" /></FormulaInput>
      </FormulaBand>

      <SheetArea>
        <Sheet />
        <VScroll>
          <VButton><TriUp /></VButton>
          <VThumb />
          <VTrack />
          <VButton><DownTri c="#222" /></VButton>
        </VScroll>
        <Connector width="190" height="90" viewBox="0 0 190 90">
          <path d="M7 69L190 2" stroke="#e60000" strokeWidth="1.6" />
          <circle cx="7" cy="69" r="3.5" fill="#e60000" />
        </Connector>
        <Callout>
          <CalloutLine $track={3.2}><Digits>24</Digits>時を超えた時間は「<Digits>27:00</Digits>」</CalloutLine>
          <CalloutLine $track={0.6}>というように入力する</CalloutLine>
        </Callout>
      </SheetArea>

      <SheetBar>
        <NavArrows>
          <TriLeft c="#bbb" />
          <TriRight c="#bbb" />
        </NavArrows>
        {sheets.map(([s, w]) => (
          <SheetTab key={s} $w={w}>{s}</SheetTab>
        ))}
        <SheetTab $w={69} $active>Sheet6</SheetTab>
        <AddSheet><PlusCircle /></AddSheet>
        <BarGrip><GripDots c="#aaa" /></BarGrip>
        <HScroll>
          <HButton><TriLeft /></HButton>
          <HThumb />
          <HTrack />
          <HButton><TriRight /></HButton>
        </HScroll>
      </SheetBar>

      <StatusBar>
        <StatusText>準備完了</StatusText>
        <Slot $w={56} $h={14}><CalcIcon /></Slot>
        <Slot $w={14} $h={14}><AccessIcon /></Slot>
        <StatusText $bold>アクセシビリティ: 検討が必要です</StatusText>
        <Slot $w={541} $h={14} />
        <DisplayIcon />
        <StatusText>表示設定</StatusText>
        <Slot $w={19} $h={14} />
        <ViewButton $w={42} $on><NormalView /></ViewButton>
        <ViewButton $w={40}><PageView /></ViewButton>
        <ViewButton $w={38}><BreakView /></ViewButton>
        <Zoomer>
          −
          <SliderTrack>
            <SliderMark $x={51} $w={1} $h={5} />
            <SliderMark $x={66} $w={3} $h={11} />
          </SliderTrack>
          +
        </Zoomer>
        <Percentage>205%</Percentage>
      </StatusBar>
    </Win>
  </Page>
)

export default App
